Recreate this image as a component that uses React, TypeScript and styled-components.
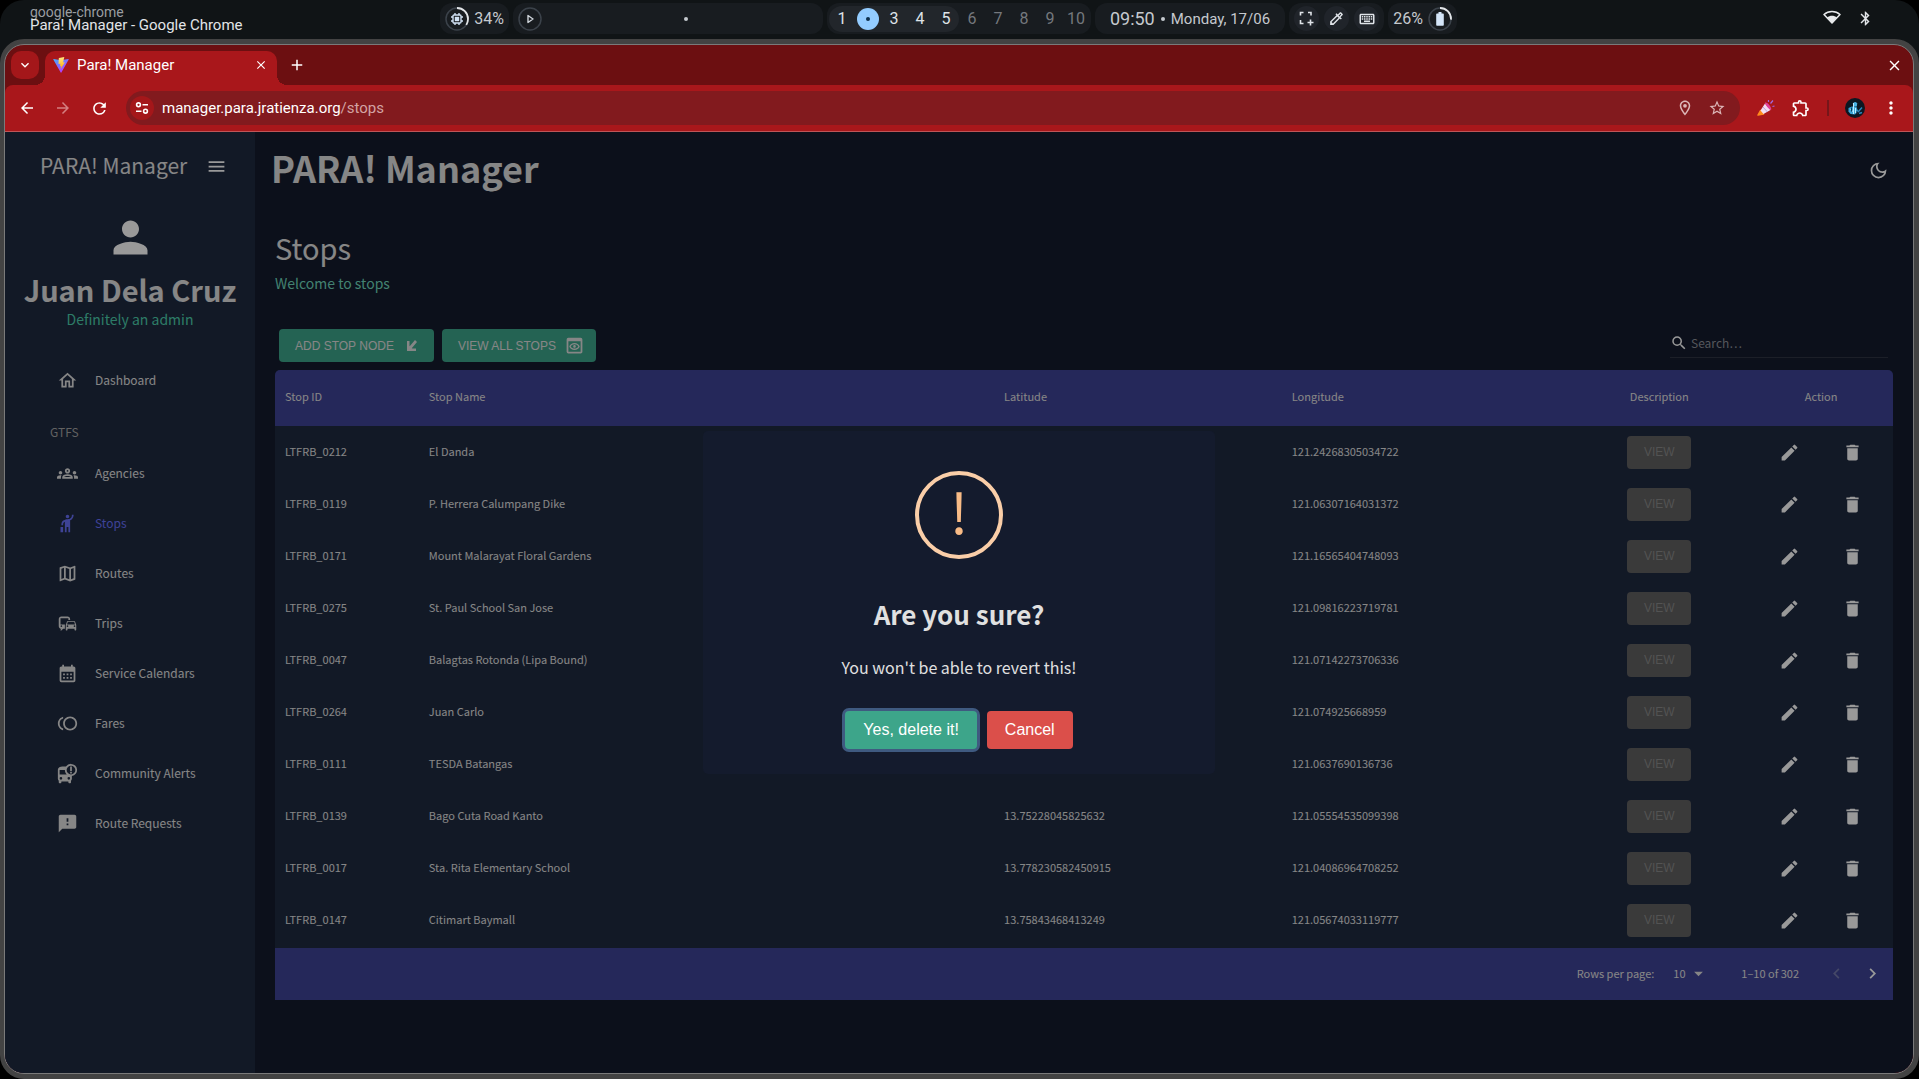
import React from "react";
import styled, { createGlobalStyle, css } from "styled-components";
import {
  MdArrowBack,
  MdArrowDropDown,
  MdArrowForward,
  MdBusAlert,
  MdCalendarMonth,
  MdClose,
  MdDelete,
  MdEdit,
  MdFeedback,
  MdHail,
  MdKeyboardArrowDown,
  MdKeyboardArrowLeft,
  MdKeyboardArrowRight,
  MdMenu,
  MdMoreVert,
  MdOutlineCommute,
  MdOutlineDarkMode,
  MdOutlineExtension,
  MdOutlineGroups,
  MdOutlineHome,
  MdOutlineKeyboard,
  MdOutlineLocationOn,
  MdOutlineMap,
  MdOutlinePreview,
  MdPerson,
  MdAdd,
  MdRefresh,
  MdSearch,
  MdStarBorder,
  MdToll,
  MdBluetooth,
  MdOutlineColorize,
} from "react-icons/md";

const appFont = `"Noto Sans CJK SC", "Noto Sans", sans-serif`;
const shellFont = `Roboto, "Noto Sans", sans-serif`;
const buttonFont = `"Liberation Sans", Arial, sans-serif`;

const GlobalStyle = createGlobalStyle`
  *, *::before, *::after { box-sizing: border-box; }
  body { margin: 0; background: #000; font-family: ${appFont}; }
  h1, h2, h3, p { margin: 0; }
  button, input, select { font: inherit; color: inherit; }
  button { padding: 0; border: 0; background: none; }
  a { color: inherit; text-decoration: none; }
  svg { display: block; flex: none; }
`;

const Desktop = styled.div`
  display: flex;
  flex-direction: column;
  min-height: 100vh;
  background: #000;
`;

/* ---------- status bar ---------- */

const StatusBar = styled.header`
  display: grid;
  grid-template-columns: 1fr auto 1fr;
  align-items: center;
  height: 63px;
  margin-bottom: -24px;
  padding: 3px 45px 29px 23px;
  border-radius: 24px 24px 0 0;
  background: #101416;
  color: #c5c9ce;
  font-family: ${shellFont};
`;

const WindowTitle = styled.div`
  display: flex;
  flex-direction: column;
  padding-left: 7px;
  font-size: 15px;
  line-height: 13px;
  color: #e2e5e8;
`;

const AppName = styled.span`
  font-size: 14px;
  color: #9a9da1;
`;

const Pills = styled.div`
  display: flex;
  gap: 4px;
`;

const Pill = styled.div<{ $width?: number; $gap?: number }>`
  display: flex;
  align-items: center;
  justify-content: center;
  gap: ${(p) => p.$gap ?? 5}px;
  height: 31px;
  width: ${(p) => (p.$width ? `${p.$width}px` : "auto")};
  padding: 0 5px;
  border-radius: 12px;
  background: #181c20;
  font-size: 16px;
`;

const MediaPill = styled(Pill)`
  justify-content: space-between;
  padding-right: 135px;
`;

const Ring = styled.span`
  position: relative;
  display: grid;
  place-items: center;
  width: 24px;
  height: 24px;
`;

const RingIcon = styled.span`
  grid-area: 1 / 1;
`;

const RingSvg = styled.svg`
  grid-area: 1 / 1;
`;

const Dot = styled.span<{ $color?: string }>`
  width: 4px;
  height: 4px;
  border-radius: 50%;
  background: ${(p) => p.$color ?? "#c5c9ce"};
`;

const Workspaces = styled(Pill)`
  gap: 0;
  padding: 0 2px;
`;

const Occupied = styled.div`
  display: flex;
  border-radius: 13px;
  background: #22262b;
`;

const Workspace = styled.button<{ $busy?: boolean }>`
  display: grid;
  place-items: center;
  width: 26px;
  height: 26px;
  font-size: 16px;
  color: ${(p) => (p.$busy ? "#dfe3e8" : "#74787d")};
`;

const ActiveMark = styled.span`
  display: grid;
  place-items: center;
  width: 22px;
  height: 22px;
  border-radius: 50%;
  background: #93ccff;
`;

const Clock = styled.span`
  font-size: 18px;
`;

const DateText = styled.span`
  font-size: 15px;
`;

const ToolButton = styled.button`
  display: grid;
  place-items: center;
  width: 25px;
  height: 25px;
  border-radius: 50%;
  background: #20242a;
  color: #dfe3e8;
`;

const Tray = styled.div`
  display: flex;
  justify-content: flex-end;
  gap: 16px;
  color: #e2e5e8;
`;

/* ---------- browser window ---------- */

const Browser = styled.div`
  flex: 1;
  display: flex;
  flex-direction: column;
  border: 5px solid #434343;
  border-left-width: 4px;
  border-radius: 24px;
  background: #434343;
  z-index: 1;
`;

const BrowserInner = styled.div`
  flex: 1;
  display: flex;
  flex-direction: column;
  overflow: hidden;
  border: 1px solid #7a7a7a;
  border-radius: 20px;
  background: #6c0f11;
  font-family: ${shellFont};
  color: #fff;
`;

const TabStrip = styled.div`
  display: flex;
  align-items: flex-end;
  height: 40px;
  padding: 0 9px 0 6px;
`;

const TabSearch = styled.button`
  display: grid;
  place-items: center;
  width: 28px;
  height: 28px;
  margin-bottom: 6px;
  border-radius: 10px;
  background: #a4171a;
`;

const Tab = styled.div`
  position: relative;
  display: flex;
  align-items: center;
  gap: 8px;
  width: 232px;
  height: 34px;
  margin-left: 6px;
  padding: 0 9px 6px 8px;
  border-radius: 10px 10px 0 0;
  background: #a9171b;
  font-size: 15px;
  &::before,
  &::after {
    content: "";
    position: absolute;
    bottom: 0;
    width: 10px;
    height: 10px;
  }
  &::before {
    left: -10px;
    background: radial-gradient(circle at 0 0, transparent 10px, #a9171b 10px);
  }
  &::after {
    right: -10px;
    background: radial-gradient(circle at 100% 0, transparent 10px, #a9171b 10px);
  }
`;

const TabTitle = styled.span`
  flex: 1;
`;

const StripButton = styled.button`
  display: grid;
  place-items: center;
  width: 20px;
  height: 40px;
`;

const NewTab = styled(StripButton)`
  margin-left: 10px;
  margin-right: auto;
`;

const Toolbar = styled.div`
  display: flex;
  align-items: center;
  height: 47px;
  padding-right: 12px;
  border-bottom: 1px solid #bf5557;
  border-radius: 8px 8px 0 0;
  background: #a9171b;
`;

const NavButton = styled.button<{ $dim?: boolean }>`
  display: grid;
  place-items: center;
  width: 36px;
  height: 36px;
  color: ${(p) => (p.$dim ? "#d47f80" : "#fff")};
`;

const NavGroup = styled.div`
  display: flex;
  padding: 0 9px 0 4px;
`;

const AddressBar = styled.div`
  flex: 1;
  display: flex;
  align-items: center;
  height: 34px;
  padding: 0 14px 0 4px;
  border-radius: 17px;
  background: #821a1e;
`;

const SiteInfo = styled.button`
  display: grid;
  place-items: center;
  width: 24px;
  height: 24px;
  margin-right: 8px;
  border-radius: 50%;
  background: #a4171a;
`;

const Url = styled.span`
  flex: 1;
  font-size: 15px;
`;

const UrlPath = styled.span`
  color: #d3a3a4;
`;

const AddressActions = styled.div`
  display: flex;
  gap: 14px;
  color: #dcb6b7;
`;

const Extensions = styled.div`
  display: flex;
  align-items: center;
  gap: 16px;
  padding-left: 17px;
`;

const Divider = styled.span`
  width: 2px;
  height: 16px;
  background: #75161a;
`;

/* ---------- page ---------- */

const Page = styled.div`
  position: relative;
  flex: 1;
  display: flex;
  background: #141b2d;
  color: #e0e0e0;
  font-family: ${appFont};
`;

const Sidebar = styled.nav`
  width: 250px;
  background: #1f2a40;
`;

const Brand = styled.div`
  display: flex;
  align-items: center;
  justify-content: space-between;
  height: 68px;
  padding: 0 28px 0 35px;
`;

const BrandName = styled.span`
  padding-bottom: 2px;
  font-size: 21px;
  line-height: 32px;
`;

const Profile = styled.div`
  display: flex;
  flex-direction: column;
  align-items: center;
  padding-top: 12px;
`;

const UserName = styled.h2`
  margin-top: 6px;
  font-size: 29px;
  line-height: 40px;
  font-weight: 700;
  white-space: nowrap;
`;

const UserRole = styled.p`
  font-size: 14px;
  line-height: 20px;
  color: #4cceac;
`;

const Menu = styled.ul`
  margin: 0;
  padding: 26px 0 0;
  list-style: none;
`;

const MenuLink = styled.a<{ $active?: boolean }>`
  display: flex;
  align-items: center;
  gap: 17px;
  height: 50px;
  padding-left: 52px;
  font-size: 12px;
  line-height: 20px;
  color: ${(p) => (p.$active ? "#6870fa" : "#e0e0e0")};
`;

const MenuSection = styled.li`
  padding: 17px 0 6px 45px;
  font-size: 12px;
  line-height: 20px;
  color: #a3a3a3;
`;

const Main = styled.main`
  flex: 1;
  display: flex;
  flex-direction: column;
  padding: 0 20px 73px;
`;

const TopRow = styled.div`
  display: flex;
  align-items: center;
  justify-content: space-between;
  height: 77px;
  padding-right: 4px;
  margin-left: -4px;
`;

const SiteTitle = styled.h1`
  padding-bottom: 7px;
  font-size: 36px;
  line-height: 48px;
  font-weight: 700;
`;

const IconButton = styled.button`
  display: grid;
  place-items: center;
  color: #fff;
`;

const PageTitle = styled.h2`
  margin-top: 18px;
  font-size: 29px;
  line-height: 40px;
  font-weight: 400;
`;

const PageLead = styled.p`
  margin-top: 6px;
  font-size: 14px;
  line-height: 20px;
  color: #70d8bd;
`;

const GridTools = styled.div`
  display: flex;
  align-items: center;
  justify-content: space-between;
  height: 49px;
  margin-top: 28px;
  padding: 0 5px 0 4px;
`;

const Actions = styled.div`
  display: flex;
  gap: 8px;
`;

const ActionButton = styled.button`
  display: flex;
  align-items: center;
  gap: 8px;
  height: 33px;
  padding: 0 11px 0 16px;
  border-radius: 4px;
  background: #3da58a;
  font-family: ${buttonFont};
  font-size: 12px;
`;

const SearchField = styled.label`
  display: flex;
  align-items: center;
  gap: 3px;
  width: 218px;
  height: 28px;
  margin-bottom: 4px;
  border-bottom: 1px solid #2f3544;
`;

const SearchInput = styled.input`
  width: 100%;
  padding: 0;
  border: 0;
  outline: 0;
  background: none;
  font-size: 12px;
  line-height: 20px;
  &::placeholder {
    color: #8d9099;
    opacity: 1;
  }
`;

const GridFrame = styled.section`
  display: flex;
  flex-direction: column;
  overflow: hidden;
  border-radius: 5px 5px 0 0;
  background: #1f2a40;
  font-size: 11px;
  line-height: 16px;
`;

const Table = styled.table`
  width: 100%;
  margin-bottom: 2px;
  table-layout: fixed;
  border-collapse: collapse;
`;

const Col = styled.col<{ $share: number }>`
  width: calc(100% * ${(p) => p.$share} / 90);
`;

const cell = css<{ $center?: boolean }>`
  text-align: ${(p) => (p.$center ? "center" : "left")};
  font-weight: 400;
  white-space: nowrap;
`;

const HeadCell = styled.th<{ $center?: boolean }>`
  ${cell}
  height: 56px;
  padding: 0 10px 4px;
  background: #3e4396;
`;

const Cell = styled.td<{ $center?: boolean }>`
  ${cell}
  height: 52px;
  padding: ${(p) => (p.$center ? "0 10px" : "0 10px 2px")};
`;

const ViewButton = styled.button`
  width: 64px;
  height: 33px;
  border-radius: 4px;
  background: #616161;
  color: #8a8a8a;
  font-family: ${buttonFont};
  font-size: 12px;
`;

const RowActions = styled.div`
  display: flex;
  justify-content: center;
  gap: 42px;
`;

const GridFooter = styled.div`
  display: flex;
  align-items: center;
  justify-content: flex-end;
  height: 52px;
  padding: 0 10px 2px 0;
  background: #3e4396;
`;

const PageSizeLabel = styled.label`
  margin-right: 19px;
`;

const SelectWrap = styled.span`
  display: grid;
  align-items: center;
  width: 36px;
  margin-right: 32px;
`;

const PageSize = styled.select`
  grid-area: 1 / 1;
  padding: 0;
  border: 0;
  outline: 0;
  appearance: none;
  background: none;
`;

const SelectArrow = styled(MdArrowDropDown)`
  grid-area: 1 / 1;
  justify-self: end;
  pointer-events: none;
`;

const PageButtons = styled.div`
  display: flex;
  gap: 15px;
  margin-left: 27px;
`;

const PageButton = styled(IconButton)`
  &:disabled {
    color: #7478ac;
  }
`;

/* ---------- dialog ---------- */

const Backdrop = styled.div`
  position: absolute;
  inset: 0;
  display: flex;
  align-items: center;
  justify-content: center;
  background: rgba(0, 0, 0, 0.4);
`;

const Dialog = styled.div`
  display: flex;
  flex-direction: column;
  align-items: center;
  width: 512px;
  padding: 40px 20px 25px;
  border-radius: 5px;
  background: #141b2d;
`;

const WarningMark = styled.div`
  display: flex;
  justify-content: center;
  width: 88px;
  height: 88px;
  border: 4px solid #facea8;
  border-radius: 50%;
  color: #f8bb86;
  font-size: 56px;
  line-height: 70px;
  font-weight: 400;
`;

const DialogTitle = styled.h2`
  margin-top: 35px;
  font-size: 26px;
  line-height: 40px;
  font-weight: 600;
`;

const DialogText = styled.p`
  margin-top: 20px;
  font-size: 16px;
  line-height: 26px;
`;

const DialogActions = styled.div`
  display: flex;
  gap: 10px;
  margin-top: 31px;
`;

const DialogButton = styled.button<{ $tone: string; $focused?: boolean }>`
  height: 38px;
  padding: 0 18px;
  border-radius: 4px;
  background: ${(p) => p.$tone};
  color: #fff;
  font-family: ${buttonFont};
  font-size: 16px;
  box-shadow: ${(p) => (p.$focused ? "0 0 0 3px #3f5a80" : "none")};
`;

const menu = [
  { label: "Agencies", Icon: MdOutlineGroups },
  { label: "Stops", Icon: MdHail, active: true },
  { label: "Routes", Icon: MdOutlineMap },
  { label: "Trips", Icon: MdOutlineCommute },
  { label: "Service Calendars", Icon: MdCalendarMonth },
  { label: "Fares", Icon: MdToll },
  { label: "Community Alerts", Icon: MdBusAlert },
  { label: "Route Requests", Icon: MdFeedback },
];

const stops = [
  ["LTFRB_0212", "El Danda", "", "121.24268305034722"],
  ["LTFRB_0119", "P. Herrera Calumpang Dike", "", "121.06307164031372"],
  ["LTFRB_0171", "Mount Malarayat Floral Gardens", "", "121.16565404748093"],
  ["LTFRB_0275", "St. Paul School San Jose", "", "121.09816223719781"],
  ["LTFRB_0047", "Balagtas Rotonda (Lipa Bound)", "", "121.07142273706336"],
  ["LTFRB_0264", "Juan Carlo", "", "121.074925668959"],
  ["LTFRB_0111", "TESDA Batangas", "", "121.0637690136736"],
  ["LTFRB_0139", "Bago Cuta Road Kanto", "13.75228045825632", "121.05554535099398"],
  ["LTFRB_0017", "Sta. Rita Elementary School", "13.778230582450915", "121.04086964708252"],
  ["LTFRB_0147", "Citimart Baymall", "13.75843468413249", "121.05674033119777"],
];

function Gauge({ share, children }: { share: number; children: React.ReactNode }) {
  return (
    <Ring>
      <RingSvg width="24" height="24" viewBox="0 0 24 24" fill="none">
        <circle cx="12" cy="12" r="11" stroke="#3b424a" strokeWidth="1.5" />
        {share > 0 && (
          <circle
            cx="12"
            cy="12"
            r="11"
            stroke="#e2e5e8"
            strokeWidth="1.8"
            pathLength={100}
            strokeDasharray={`${share} 100`}
            transform="rotate(-90 12 12)"
          />
        )}
      </RingSvg>
      <RingIcon>{children}</RingIcon>
    </Ring>
  );
}

const ChipIcon = () => (
  <svg width="14" height="14" viewBox="0 0 14 14" fill="none" stroke="#cfe0f2" strokeWidth="1.4">
    <rect x="3" y="3" width="8" height="8" rx="1" />
    <rect x="5.5" y="5.5" width="3" height="3" fill="#cfe0f2" />
    <path d="M5 1v2M9 1v2M5 11v2M9 11v2M1 5h2M1 9h2M11 5h2M11 9h2" />
  </svg>
);

const PlayIcon = () => (
  <svg width="10" height="10" viewBox="0 0 10 10" fill="none" stroke="#cfd5db" strokeWidth="1.4" strokeLinejoin="round">
    <path d="M3 1.5v7L8 5z" />
  </svg>
);

const BatteryIcon = () => (
  <svg width="8" height="14" viewBox="0 0 8 14" fill="#d4e5f8">
    <path d="M2.500 0h3v1.500H7a.8.8 0 0 1 .8.800V13a.8.8 0 0 1-.8.800H1A.8.8 0 0 1 .2 13V2.300a.8.8 0 0 1 .8-.800h1.500z" />
  </svg>
);

const CaptureIcon = () => (
  <svg width="15" height="15" viewBox="0 0 15 15" fill="none" stroke="currentColor" strokeWidth="1.6">
    <path d="M1.500 4.500v-3h3M9 1.500h3v3M1.500 9v3.500h3M11.500 8.500v6M8.500 11.500h6" />
  </svg>
);

const WifiIcon = () => (
  <svg width="18" height="14" viewBox="0 0 18 14">
    <path d="M1 4.500C5.500 .4 12.500 .4 17 4.500L9 13z" fill="none" stroke="#e8eaec" strokeWidth="1.5" strokeLinejoin="round" />
    <path d="M4 7.300c3-2.100 7-2.100 10 0L9 13z" fill="#e8eaec" />
  </svg>
);

const ViteLogo = () => (
  <svg width="16" height="16" viewBox="0 0 16 16">
    <defs>
      <linearGradient id="vite-body" x1="0" y1="0" x2="0.6" y2="1">
        <stop offset="0" stopColor="#41b1ff" />
        <stop offset="1" stopColor="#bd34fe" />
      </linearGradient>
      <linearGradient id="vite-bolt" x1="0.4" y1="0" x2="0.5" y2="1">
        <stop offset="0" stopColor="#ffea83" />
        <stop offset="1" stopColor="#ffa800" />
      </linearGradient>
    </defs>
    <path d="M15.700 2.600 8.400 15.600a.4.4 0 0 1-.7 0L.3 2.600a.4.4 0 0 1 .4-.6l7.300 1.300 7.300-1.300a.4.4 0 0 1 .4.600z" fill="url(#vite-body)" />
    <path d="M11.300.1 6 1.100a.2.2 0 0 0-.2.200L5.500 7l1.900-.2-.4 2.400 1.300-.3-.7 3.400 4.300-7.100-1.800.3z" fill="url(#vite-bolt)" />
  </svg>
);

const TuneIcon = () => (
  <svg width="16" height="16" viewBox="0 0 16 16" fill="none" stroke="#fff" strokeWidth="1.6">
    <circle cx="4.500" cy="4.800" r="1.900" />
    <path d="M8.500 4.800H14M2 11.200h5.500" />
    <circle cx="11.500" cy="11.200" r="1.900" />
  </svg>
);

const HornIcon = () => (
  <svg width="18" height="18" viewBox="0 0 18 18">
    <path d="M1 16 3.500 11.500 6.500 15z" fill="#ff8a1c" stroke="#ff8a1c" strokeWidth="1.5" strokeLinejoin="round" />
    <path d="M3.500 11.500 8 4.500l5.500 6.500-7 4z" fill="#f3ddf3" />
    <path d="M6 8 10.500 13" stroke="#b9a3dc" strokeWidth="1" />
    <path d="M8 3.500c2-1 7.500 5 6 7.500-2-.5-6-5-6-7.500z" fill="#e0409a" />
    <path d="M11.500 1v2M13.500 4.500l2.500-3M15.500 7.500l2-.5" stroke="#a06ae0" strokeWidth="1.2" />
  </svg>
);

const AvatarIcon = () => (
  <svg width="20" height="20" viewBox="0 0 20 20">
    <circle cx="10" cy="10" r="10" fill="#0c1722" />
    <path d="M8 5.500a2.200 2.200 0 0 1 4.200 0l-.4 3-3.400.2z" fill="#49b4e6" />
    <path d="M3.500 10 7 8.500l4.500.5 1.500 4-3 3.500-4.500-.5-2-2.500z" fill="#3aa6d8" />
    <path d="M8.500 5v11M5.500 11.500l2.500 2M10.500 10v5" stroke="#b8ecff" strokeWidth="1" />
    <path d="M6.500 9.500v4M12 13v3" stroke="#0c3a58" strokeWidth="1" />
    <path d="M13 14l4-4.500M14 15.500l3-1" stroke="#2a86bd" strokeWidth="1.5" />
  </svg>
);

const DownLeftIcon = () => (
  <svg width="21" height="21" viewBox="0 0 21 21" fill="#e0e0e0">
    <path d="M5 6h2.500v5.500L13 5l2 2-5.500 6.500H14V16H5z" />
    <path d="M7 16 7 11l4.500 4z" />
  </svg>
);

export default function App() {
  return (
    <Desktop>
      <GlobalStyle />
      <StatusBar>
        <WindowTitle>
          <AppName>google-chrome</AppName>
          <span>Para! Manager - Google Chrome</span>
        </WindowTitle>
        <Pills>
          <Pill $width={69}>
            <Gauge share={34}>
              <ChipIcon />
            </Gauge>
            <span>34%</span>
          </Pill>
          <MediaPill $width={310}>
            <Gauge share={0}>
              <PlayIcon />
            </Gauge>
            <Dot />
          </MediaPill>
          <Workspaces>
            <Occupied>
              {[1, 2, 3, 4, 5].map((n) => (
                <Workspace key={n} $busy aria-label={`Workspace ${n}`}>
                  {n === 2 ? (
                    <ActiveMark>
                      <Dot $color="#0c2f4b" />
                    </ActiveMark>
                  ) : (
                    n
                  )}
                </Workspace>
              ))}
            </Occupied>
            {[6, 7, 8, 9, 10].map((n) => (
              <Workspace key={n}>{n}</Workspace>
            ))}
          </Workspaces>
          <Pill $width={190} $gap={6}>
            <Clock>09:50</Clock>
            <Dot />
            <DateText>Monday, 17/06</DateText>
          </Pill>
          <Pill $width={95}>
            <ToolButton aria-label="Capture area">
              <CaptureIcon />
            </ToolButton>
            <ToolButton aria-label="Pick colour">
              <MdOutlineColorize size={17} />
            </ToolButton>
            <ToolButton aria-label="Keyboard">
              <MdOutlineKeyboard size={18} />
            </ToolButton>
          </Pill>
          <Pill $width={69}>
            <span>26%</span>
            <Gauge share={26}>
              <BatteryIcon />
            </Gauge>
          </Pill>
        </Pills>
        <Tray>
          <WifiIcon />
          <MdBluetooth size={17} />
        </Tray>
      </StatusBar>

      <Browser>
        <BrowserInner>
          <TabStrip>
            <TabSearch aria-label="Search tabs">
              <MdKeyboardArrowDown size={16} />
            </TabSearch>
            <Tab>
              <ViteLogo />
              <TabTitle>Para! Manager</TabTitle>
              <MdClose size={14} />
            </Tab>
            <NewTab aria-label="New tab">
              <MdAdd size={18} />
            </NewTab>
            <StripButton aria-label="Close window">
              <MdClose size={17} />
            </StripButton>
          </TabStrip>
          <Toolbar>
            <NavGroup>
              <NavButton aria-label="Back">
                <MdArrowBack size={18} />
              </NavButton>
              <NavButton $dim aria-label="Forward">
                <MdArrowForward size={18} />
              </NavButton>
              <NavButton aria-label="Reload">
                <MdRefresh size={19} />
              </NavButton>
            </NavGroup>
            <AddressBar>
              <SiteInfo aria-label="Site information">
                <TuneIcon />
              </SiteInfo>
              <Url>
                manager.para.jratienza.org<UrlPath>/stops</UrlPath>
              </Url>
              <AddressActions>
                <MdOutlineLocationOn size={18} />
                <MdStarBorder size={18} />
              </AddressActions>
            </AddressBar>
            <Extensions>
              <HornIcon />
              <MdOutlineExtension size={20} />
              <Divider />
              <AvatarIcon />
              <MdMoreVert size={20} />
            </Extensions>
          </Toolbar>

          <Page>
            <Sidebar>
              <Brand>
                <BrandName>PARA! Manager</BrandName>
                <IconButton aria-label="Collapse menu">
                  <MdMenu size={21} color="#fff" />
                </IconButton>
              </Brand>
              <Profile>
                <MdPerson size={51} color="#fff" />
                <UserName>Juan Dela Cruz</UserName>
                <UserRole>Definitely an admin</UserRole>
              </Profile>
              <Menu>
                <li>
                  <MenuLink href="#dashboard">
                    <MdOutlineHome size={21} />
                    Dashboard
                  </MenuLink>
                </li>
                <MenuSection>GTFS</MenuSection>
                {menu.map(({ label, Icon, active }) => (
                  <li key={label}>
                    <MenuLink href={`#${label}`} $active={active}>
                      <Icon size={21} />
                      {label}
                    </MenuLink>
                  </li>
                ))}
              </Menu>
            </Sidebar>

            <Main>
              <TopRow>
                <SiteTitle>PARA! Manager</SiteTitle>
                <IconButton aria-label="Toggle theme">
                  <MdOutlineDarkMode size={21} />
                </IconButton>
              </TopRow>
              <PageTitle>Stops</PageTitle>
              <PageLead>Welcome to stops</PageLead>

              <GridTools>
                <Actions>
                  <ActionButton>
                    ADD STOP NODE
                    <DownLeftIcon />
                  </ActionButton>
                  <ActionButton>
                    VIEW ALL STOPS
                    <MdOutlinePreview size={21} />
                  </ActionButton>
                </Actions>
                <SearchField>
                  <MdSearch size={18} color="#fff" />
                  <SearchInput type="text" placeholder="Search…" aria-label="Search" />
                </SearchField>
              </GridTools>

              <GridFrame>
                <Table>
                  <colgroup>
                    <Col $share={8} />
                    <Col $share={32} />
                    <Col $share={16} />
                    <Col $share={16} />
                    <Col $share={10} />
                    <Col $share={8} />
                  </colgroup>
                  <thead>
                    <tr>
                      <HeadCell>Stop ID</HeadCell>
                      <HeadCell>Stop Name</HeadCell>
                      <HeadCell>Latitude</HeadCell>
                      <HeadCell>Longitude</HeadCell>
                      <HeadCell $center>Description</HeadCell>
                      <HeadCell $center>Action</HeadCell>
                    </tr>
                  </thead>
                  <tbody>
                    {stops.map(([id, name, lat, lon]) => (
                      <tr key={id}>
                        <Cell>{id}</Cell>
                        <Cell>{name}</Cell>
                        <Cell>{lat}</Cell>
                        <Cell>{lon}</Cell>
                        <Cell $center>
                          <ViewButton disabled>VIEW</ViewButton>
                        </Cell>
                        <Cell $center>
                          <RowActions>
                            <IconButton aria-label={`Edit ${id}`}>
                              <MdEdit size={21} />
                            </IconButton>
                            <IconButton aria-label={`Delete ${id}`}>
                              <MdDelete size={21} />
                            </IconButton>
                          </RowActions>
                        </Cell>
                      </tr>
                    ))}
                  </tbody>
                </Table>
                <GridFooter>
                  <PageSizeLabel htmlFor="page-size">Rows per page:</PageSizeLabel>
                  <SelectWrap>
                    <PageSize id="page-size" defaultValue="10">
                      <option>10</option>
                    </PageSize>
                    <SelectArrow size={21} />
                  </SelectWrap>
                  <span>1–10 of 302</span>
                  <PageButtons>
                    <PageButton disabled aria-label="Previous page">
                      <MdKeyboardArrowLeft size={21} />
                    </PageButton>
                    <PageButton aria-label="Next page">
                      <MdKeyboardArrowRight size={21} />
                    </PageButton>
                  </PageButtons>
                </GridFooter>
              </GridFrame>
            </Main>

            <Backdrop>
              <Dialog role="dialog" aria-modal="true" aria-labelledby="dialog-title">
                <WarningMark>!</WarningMark>
                <DialogTitle id="dialog-title">Are you sure?</DialogTitle>
                <DialogText>You won't be able to revert this!</DialogText>
                <DialogActions>
                  <DialogButton $tone="#3da58a" $focused>
                    Yes, delete it!
                  </DialogButton>
                  <DialogButton $tone="#db4f4a">Cancel</DialogButton>
                </DialogActions>
              </Dialog>
            </Backdrop>
          </Page>
        </BrowserInner>
      </Browser>
    </Desktop>
  );
}
